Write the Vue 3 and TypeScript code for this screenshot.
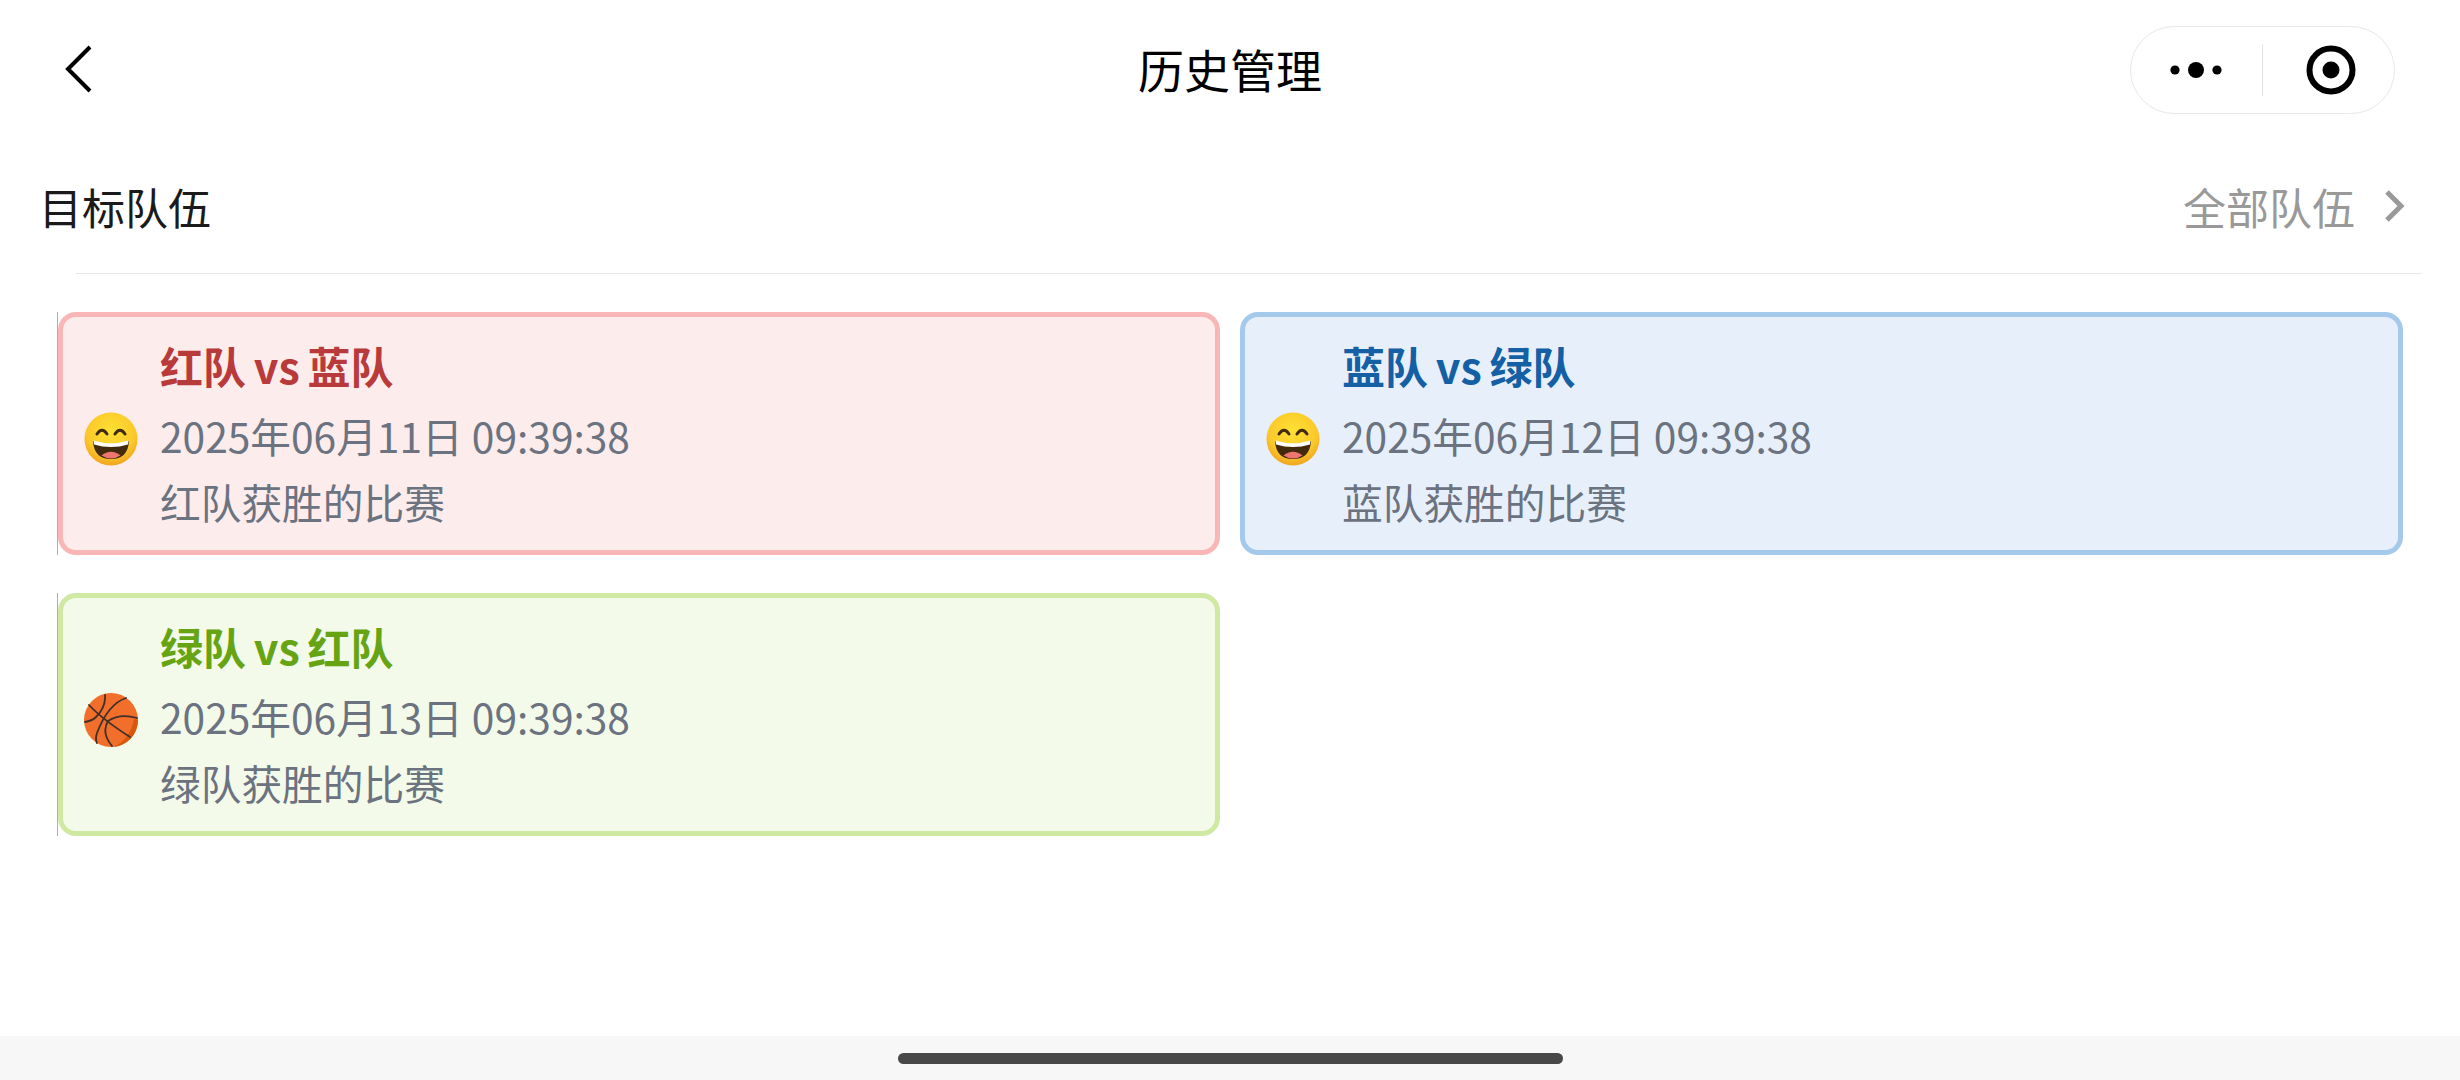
<script setup lang="ts">
interface Match {
  id: number
  title: string
  time: string
  desc: string
  team: 'red' | 'blue' | 'green'
  icon: 'smile' | 'ball'
}

const matches: Match[] = [
  { id: 1, title: '红队 vs 蓝队', time: '2025年06月11日 09:39:38', desc: '红队获胜的比赛', team: 'red', icon: 'smile' },
  { id: 2, title: '蓝队 vs 绿队', time: '2025年06月12日 09:39:38', desc: '蓝队获胜的比赛', team: 'blue', icon: 'smile' },
  { id: 3, title: '绿队 vs 红队', time: '2025年06月13日 09:39:38', desc: '绿队获胜的比赛', team: 'green', icon: 'ball' },
]
</script>

<template>
  <div class="page">
    <header class="nav">
      <svg class="back" width="40" height="60" viewBox="0 0 40 60">
        <path d="M30 7 L8 29 L30 51" fill="none" stroke="#000" stroke-width="4" />
      </svg>
      <h1 class="nav-title">历史管理</h1>
      <div class="capsule">
        <svg class="dots" width="60" height="24" viewBox="0 0 60 24">
          <circle cx="9" cy="12" r="4.6" />
          <circle cx="30" cy="12" r="8" />
          <circle cx="51" cy="12" r="4.6" />
        </svg>
        <span class="capsule-line"></span>
        <svg class="target" width="50" height="50" viewBox="0 0 50 50">
          <circle cx="25" cy="25" r="21.5" fill="none" stroke="#000" stroke-width="6" />
          <circle cx="25" cy="25" r="8.5" />
        </svg>
      </div>
    </header>

    <div class="picker">
      <span class="picker-label">目标队伍</span>
      <span class="picker-value">
        全部队伍
        <svg width="22" height="34" viewBox="0 0 22 34">
          <path d="M3 3 L17 17 L3 31" fill="none" stroke="#999" stroke-width="5" />
        </svg>
      </span>
    </div>
    <div class="divider"></div>

    <main class="grid">
      <div v-for="m in matches" :key="m.id" class="cell">
        <div class="card" :class="m.team">
          <svg v-if="m.icon === 'smile'" class="emoji" width="54" height="54" viewBox="0 0 54 54">
            <defs>
              <radialGradient :id="`face${m.id}`" cx="50%" cy="35%" r="65%">
                <stop offset="0%" stop-color="#fee133" />
                <stop offset="70%" stop-color="#fbc82b" />
                <stop offset="100%" stop-color="#f0a51f" />
              </radialGradient>
            </defs>
            <circle cx="27" cy="27" r="26.5" :fill="`url(#face${m.id})`" />
            <path d="M13 22 Q18 14.5 23 22 M31 22 Q36 14.5 41 22" fill="none" stroke="#422b0d" stroke-width="3" stroke-linecap="round" />
            <path d="M9 29 Q27 35 45 29 Q44 47 27 47 Q10 47 9 29 Z" fill="#422b0d" />
            <path d="M9.5 28.5 Q27 34 44.5 28.5 L44 32.5 Q27 37.5 10 32.5 Z" fill="#fff" />
            <path d="M17.5 43.5 Q27 36 36.5 43.5 Q27 49.5 17.5 43.5 Z" fill="#ed7770" />
          </svg>
          <svg v-else class="emoji" width="54" height="54" viewBox="0 0 54 54">
            <circle cx="27" cy="27" r="27" fill="#f26e2b" />
            <path d="M54 27 A27 27 0 0 1 29 54 Q46 47 50 26 Z" fill="#d9560f" />
            <g fill="none" stroke="#40302a" stroke-width="1.8" stroke-linecap="round">
              <path d="M21 2 Q22 14 12 24 Q8 28 1 29" />
              <path d="M42 5 Q24 11 13 40 Q11 46 13 50" />
              <path d="M5 12 Q18 26 46 44" />
              <path d="M53 25 Q36 20 24 28 Q17 40 28 53" />
            </g>
          </svg>
          <div class="info">
            <div class="title">{{ m.title }}</div>
            <div class="line">{{ m.time }}</div>
            <div class="line">{{ m.desc }}</div>
          </div>
        </div>
      </div>
    </main>

    <footer class="home">
      <span class="home-bar"></span>
    </footer>
  </div>
</template>

<style scoped>
.page {
  width: 2460px;
  height: 1080px;
  display: flex;
  flex-direction: column;
  background: #fff;
  font-family: "Noto Sans CJK SC", "Noto Sans", sans-serif;
  overflow: hidden;
}

.nav {
  height: 140px;
  display: grid;
  grid-template-columns: 1fr auto 1fr;
  align-items: center;
  padding: 0 65px;
}

.back {
  display: block;
  margin-left: -5px;
}

.nav-title {
  margin: 0 0 5px;
  font-size: 46px;
  font-weight: 400;
  color: #000;
}

.capsule {
  justify-self: end;
  width: 265px;
  height: 88px;
  box-sizing: border-box;
  border: 1px solid #e8e8e8;
  border-radius: 44px;
  display: flex;
  align-items: center;
  padding-left: 35px;
}

.capsule-line {
  width: 1px;
  height: 52px;
  background: #e2e2e2;
  margin-left: 36px;
}

.target {
  margin-left: 43px;
}

.picker {
  height: 133px;
  box-sizing: border-box;
  padding: 0 54px 2px 39px;
  display: flex;
  align-items: center;
  justify-content: space-between;
  font-size: 43px;
}

.picker-label {
  color: #1a1a1a;
}

.picker-value {
  display: flex;
  align-items: center;
  gap: 29px;
  color: #999;
}

.divider {
  height: 1px;
  margin: 0 38px 0 76px;
  background: #e8e8e8;
}

.grid {
  flex: 1;
  margin-top: 38px;
  padding: 0 56px 0 57px;
  display: grid;
  grid-template-columns: 1163px 1163px;
  column-gap: 20px;
  row-gap: 38px;
  align-content: start;
}

.cell {
  border-left: 1px solid rgba(176, 70, 100, 0.55);
}

.cell:nth-child(2) {
  border-left: none;
}

.card {
  height: 243px;
  box-sizing: border-box;
  border: 5px solid;
  border-radius: 18px;
  display: flex;
  align-items: center;
  gap: 22px;
  padding-left: 21px;
}

.card.red {
  background: #fcecec;
  border-color: #f9b6b6;
}

.card.blue {
  background: #e7f0fa;
  border-color: #a5c9eb;
}

.card.green {
  background: #f3fae9;
  border-color: #cfe9a3;
}

.emoji {
  flex-shrink: 0;
  margin-top: 10px;
}

.info {
  display: flex;
  flex-direction: column;
}

.title {
  font-size: 43px;
  line-height: 66px;
  font-weight: 700;
  word-spacing: -2px;
  margin-bottom: 5px;
}

.red .title {
  color: #b93a3a;
}

.blue .title {
  color: #155fa5;
}

.green .title {
  color: #67a414;
}

.line {
  font-size: 40.7px;
  line-height: 66px;
  color: #6b7280;
}

.home {
  height: 44px;
  background: #f7f7f7;
  display: flex;
  justify-content: center;
  padding-top: 17px;
  box-sizing: border-box;
}

.home-bar {
  width: 665px;
  height: 11px;
  border-radius: 6px;
  background: #484848;
}
</style>

<style>
html,
body {
  margin: 0;
  background: #fff;
}
</style>
